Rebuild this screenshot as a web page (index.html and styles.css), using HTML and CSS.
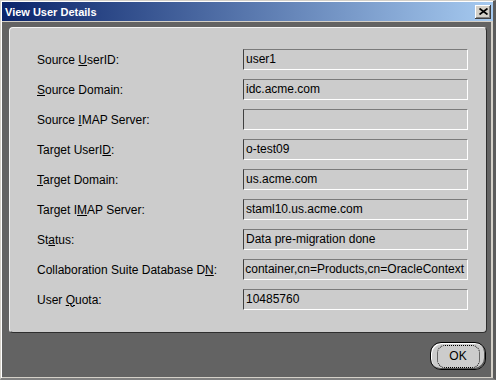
FILE: index.html
```html
<!DOCTYPE html>
<html lang="en">
<head>
  <meta charset="UTF-8" />
  <title>View User Details</title>
  <link rel="stylesheet" href="styles.css">
</head>
<body>

  <div class="window">
    <div class="titlebar">
      <span class="title">View User Details</span>
      <button class="close-btn" aria-label="Close">
        <svg width="9" height="7" viewBox="0 0 9 7"><path d="M0.5 0.5 L8.5 6.5 M8.5 0.5 L0.5 6.5" stroke="#000" stroke-width="1.7" fill="none"/></svg>
      </button>
    </div>

    <div class="client">
      <div class="panel">
        <div class="form-grid">
          <label>Source <u>U</u>serID:</label>
          <div class="field">user1</div>

          <label><u>S</u>ource Domain:</label>
          <div class="field">idc.acme.com</div>

          <label>Source <u>I</u>MAP Server:</label>
          <div class="field"></div>

          <label>Target UserI<u>D</u>:</label>
          <div class="field">o-test09</div>

          <label><u>T</u>arget Domain:</label>
          <div class="field">us.acme.com</div>

          <label>Target I<u>M</u>AP Server:</label>
          <div class="field">staml10.us.acme.com</div>

          <label>St<u>a</u>tus:</label>
          <div class="field">Data pre-migration done</div>

          <label>Collaboration Suite Database D<u>N</u>:</label>
          <div class="field field-end"><span>container,cn=Products,cn=OracleContext</span></div>

          <label>User <u>Q</u>uota:</label>
          <div class="field">10485760</div>
        </div>
      </div>

      <div class="actions">
        <button class="ok-btn">OK</button>
      </div>
    </div>
  </div>

</body>
</html>
```

FILE: styles.css
```css
body { margin: 0; font-family: "Liberation Sans", Arial, sans-serif; font-size: 12px; color: #000; }

.window {
  display: flex;
  flex-direction: column;
  width: 496px;
  height: 380px;
  box-sizing: border-box;
  background: #d4d0c8;
  border-style: solid;
  border-width: 1px 3px 2px 1px;
  border-color: #d4d0c8 #5c5c5c #808080 #d4d0c8;
  padding: 1px 2px 1px 1px;
  box-shadow: inset 1px 1px 0 #fff;
}

.titlebar {
  display: flex;
  align-items: center;
  justify-content: space-between;
  height: 19px;
  margin: 0 -2px 1px 0;
  padding: 0 2px 0 3px;
  background: linear-gradient(to right, #0a246a, #a6caf0);
}
.title { color: #fff; font-weight: bold; font-size: 11px; }
.close-btn {
  display: flex;
  align-items: center;
  justify-content: center;
  width: 16px;
  height: 14px;
  padding: 0;
  border: 0;
  background: #d4d0c8;
  box-shadow: inset -1px -1px 0 #404040, inset 1px 1px 0 #fff, inset -2px -2px 0 #808080;
}

.client {
  flex: 1;
  display: flex;
  flex-direction: column;
  background: #636363;
  padding: 5px 4px 0 7px;
}

.panel {
  height: 306px;
  box-sizing: border-box;
  background: #cccccc;
  border: 1px solid;
  border-color: #f4f4f4 #2e2e2e #2e2e2e #f4f4f4;
  border-radius: 4px;
  padding: 21px 18px 0 27px;
}

.form-grid {
  display: grid;
  grid-template-columns: 206px 225px;
  grid-auto-rows: 21px;
  row-gap: 9px;
  align-items: center;
}

.field {
  height: 21px;
  box-sizing: border-box;
  border: 1px solid;
  border-color: #7b7b7b #fff #fff #404040;
  padding: 0 2px;
  line-height: 19px;
  white-space: nowrap;
  overflow: hidden;
}
.field-end { display: flex; justify-content: flex-end; padding-right: 3px; }

.actions { display: flex; justify-content: flex-end; margin-top: 9px; }
.ok-btn {
  position: relative;
  width: 56px;
  height: 28px;
  margin-right: 1px;
  padding: 0;
  border: 1px solid #000;
  border-radius: 11px;
  background: #cccccc;
  font: 12px "Liberation Sans", Arial, sans-serif;
  color: #000;
  box-shadow: inset 1px 1px 0 #fff, inset -1px -1px 0 #555;
}
.ok-btn::after {
  content: "";
  position: absolute;
  top: 2px;
  bottom: 1px;
  left: 6px;
  right: 5px;
  border: 1px dotted #000;
  border-radius: 8px;
}
```
